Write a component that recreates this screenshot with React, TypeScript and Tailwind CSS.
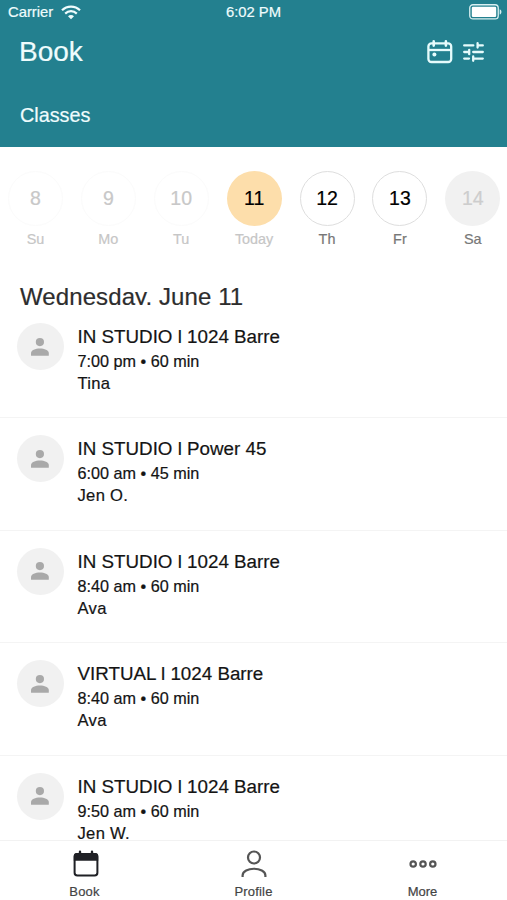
type Day = { num: string; label: string; circle: string; text: string };

const days: Day[] = [
  { num: "8", label: "Su", circle: "border border-[#fbfbfb] text-[#c8c8c8]", text: "text-[#c6c6c6]" },
  { num: "9", label: "Mo", circle: "border border-[#fbfbfb] text-[#c8c8c8]", text: "text-[#c6c6c6]" },
  { num: "10", label: "Tu", circle: "border border-[#fbfbfb] text-[#c8c8c8]", text: "text-[#c6c6c6]" },
  { num: "11", label: "Today", circle: "bg-[#fddeab] text-black", text: "text-[#c6c6c6]" },
  { num: "12", label: "Th", circle: "border border-[#dedede] text-black", text: "text-[#777777]" },
  { num: "13", label: "Fr", circle: "border border-[#dedede] text-black", text: "text-[#777777]" },
  { num: "14", label: "Sa", circle: "bg-[#f1f1f1] text-[#cdcdcd]", text: "text-[#777777]" },
];

const classes = [
  { title: "IN STUDIO l 1024 Barre", time: "7:00 pm • 60 min", teacher: "Tina" },
  { title: "IN STUDIO l Power 45", time: "6:00 am • 45 min", teacher: "Jen O." },
  { title: "IN STUDIO l 1024 Barre", time: "8:40 am • 60 min", teacher: "Ava" },
  { title: "VIRTUAL l 1024 Barre", time: "8:40 am • 60 min", teacher: "Ava" },
  { title: "IN STUDIO l 1024 Barre", time: "9:50 am • 60 min", teacher: "Jen W." },
];

function WifiIcon() {
  return (
    <svg width="20" height="15" viewBox="0 0 20 15" fill="none" stroke="#effcfd" strokeWidth="2.2">
      <path d="M1 5.2C6 .3 14 .3 19 5.2" />
      <path d="M4.2 8.6c3.3-3.2 8.3-3.2 11.6 0" />
      <path d="M10 14.2 7 11.3c1.7-1.6 4.3-1.6 6 0z" fill="#effcfd" stroke="none" />
    </svg>
  );
}

function BatteryIcon() {
  return (
    <svg width="33" height="16" viewBox="0 0 33 16" fill="none">
      <rect x="0.75" y="0.75" width="28.5" height="14.2" rx="3.2" stroke="#d9eff1" strokeWidth="1.3" />
      <rect x="2.8" y="2.8" width="24.4" height="10.1" rx="1.2" fill="#ffffff" />
      <path d="M30.7 5.2c2.3.8 2.3 4.5 0 5.3z" fill="#d9eff1" />
    </svg>
  );
}

function CalendarIcon() {
  return (
    <svg width="26" height="24" viewBox="0 0 26 24" fill="none" stroke="#e6fbfc" strokeWidth="2.3">
      <rect x="1.4" y="3.4" width="22.8" height="18.6" rx="3" />
      <path d="M1.4 10h22.8" />
      <path d="M6.7 1.4v4.2M18.9 1.4v4.2" strokeWidth="2.6" strokeLinecap="round" />
      <circle cx="7.4" cy="14.4" r="2" fill="#e6fbfc" stroke="none" />
    </svg>
  );
}

function TuneIcon() {
  return (
    <svg width="21" height="20" viewBox="0 0 21 20" fill="none" stroke="#e6fbfc" strokeWidth="2.3" strokeLinecap="round">
      <path d="M1.2 3.4h9.1M14.8 3.4h5M14.6 1.2v4.4" />
      <path d="M1.2 10h4.8M10.2 10h9.6M6.2 7.8v4.4" />
      <path d="M1.2 16.6h4.8M10.2 16.6h9.6M10.2 14.4v4.4" />
    </svg>
  );
}

function Avatar() {
  return (
    <div className="flex h-[47px] w-[47px] shrink-0 items-center justify-center rounded-full bg-[#f1f1f1]">
      <svg width="18" height="18" viewBox="0 0 18 18" fill="#a9a9a9" className="mr-px">
        <circle cx="8.9" cy="4.1" r="4.1" />
        <path d="M0 17.3v-2.1C0 8.9 17.8 8.9 17.8 15.2v2.1q0 .5-.5.5H.5q-.5 0-.5-.5z" />
      </svg>
    </div>
  );
}

export default function App() {
  return (
    <div className="flex h-[900px] w-[507px] flex-col overflow-hidden bg-white font-['Liberation_Sans',Arial,sans-serif] text-[#141414] [-webkit-text-stroke:0.2px]">
      <header className="h-[147px] shrink-0 bg-[#23808f] text-[#effcfd]">
        <div className="grid h-6 grid-cols-3 items-center pr-[5px] pl-2">
          <div className="flex items-center gap-2 text-[14.8px] leading-6">
            <span>Carrier</span>
            <WifiIcon />
          </div>
          <div className="-ml-[3px] text-center text-[14.8px] leading-6">6:02 PM</div>
          <div className="flex justify-end">
            <BatteryIcon />
          </div>
        </div>
        <div className="flex h-14 items-center justify-between pr-[23px] pl-[19px]">
          <h1 className="text-[28px] leading-8">Book</h1>
          <div className="flex items-center gap-2.5">
            <CalendarIcon />
            <TuneIcon />
          </div>
        </div>
        <div className="pt-[23px] pl-5 text-[19.8px] leading-6">Classes</div>
      </header>

      <nav className="flex h-[135px] shrink-0 pt-[23.5px]">
        {days.map((d) => (
          <div key={d.label} className="flex w-[72.9px] shrink-0 flex-col items-center first:ml-[-1px]">
            <div className={`flex h-[55px] w-[55px] items-center justify-center rounded-full pt-px text-[19.5px] ${d.circle}`}>
              {d.num}
            </div>
            <div className={`mt-[3px] text-[14.4px] leading-5 ${d.text}`}>{d.label}</div>
          </div>
        ))}
      </nav>

      <main className="min-h-0 flex-1 overflow-hidden">
        <h2 className="mb-px h-[23px] overflow-hidden pl-5 text-[24px] leading-[30px] tracking-[0.1px] text-[#2d2d2d]">
          Wednesday, June 11
        </h2>
        {classes.map((c, i) => (
          <article key={i} className="flex h-[112.4px] gap-[13.5px] border-b border-[#f4f4f4] pt-[17px] pl-[17px]">
            <Avatar />
            <div>
              <div className="pt-0.5 text-[18.8px] leading-6">{c.title}</div>
              <div className="text-[16.2px] leading-6">{c.time}</div>
              <div className="text-[16.6px] leading-[22px] tracking-[0.3px]">{c.teacher}</div>
            </div>
          </article>
        ))}
      </main>

      <footer className="flex h-[60px] shrink-0 border-t border-[#f2f2f2] bg-white text-[13px] text-[#444444]">
        <div className="flex w-[169px] flex-col items-center pt-[9px]">
          <svg width="26" height="28" viewBox="0 0 26 28" className="ml-[3px]">
            <rect x="1.6" y="4" width="22.8" height="21.6" rx="2.8" fill="none" stroke="#1f2025" strokeWidth="2" />
            <path d="M.8 10.8V6q0-3 3-3h18.4q3 0 3 3v4.8z" fill="#1f2025" />
            <path d="M7 1.8v3M19 1.8v3" stroke="#1f2025" strokeWidth="2.4" strokeLinecap="round" />
          </svg>
          <span className="mt-1.5 leading-4 tracking-[0.2px]">Book</span>
        </div>
        <div className="flex w-[169px] flex-col items-center pt-[9px]">
          <svg width="26" height="28" viewBox="0 0 26 28" fill="none" stroke="#555555" strokeWidth="2.2">
            <circle cx="13" cy="7.5" r="6" />
            <path d="M1.6 27v-1.5c0-9 22.8-9 22.8 0V27" />
          </svg>
          <span className="mt-1.5 leading-4 tracking-[0.2px]">Profile</span>
        </div>
        <div className="flex w-[169px] flex-col items-center pt-[9px]">
          <svg width="28" height="28" viewBox="0 0 28 28" fill="none" stroke="#555555" strokeWidth="2.2">
            <circle cx="4.2" cy="14" r="2.7" />
            <circle cx="14" cy="14" r="2.7" />
            <circle cx="23.8" cy="14" r="2.7" />
          </svg>
          <span className="mt-1.5 leading-4">More</span>
        </div>
      </footer>
    </div>
  );
}
